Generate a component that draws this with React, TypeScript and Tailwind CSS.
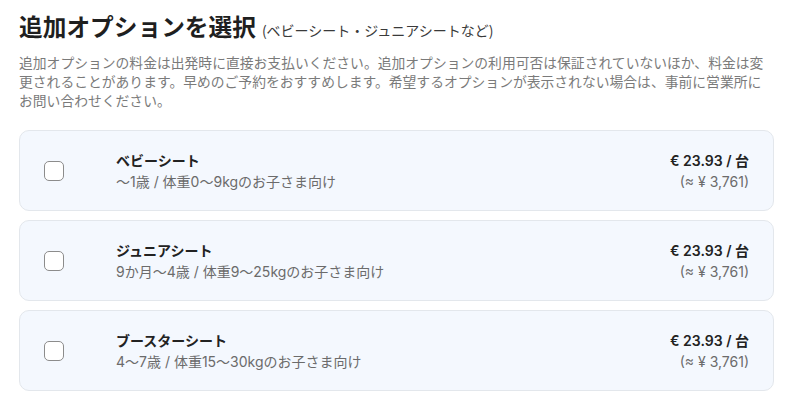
import React, { useState } from 'react';

interface SeatOption {
  id: string;
  name: string;
  note: string;
  price: string;
  approx: string;
}

const options: SeatOption[] = [
  { id: 'baby', name: 'ベビーシート', note: '〜1歳 / 体重0〜9kgのお子さま向け', price: '€ 23.93 / 台', approx: '(≈ ¥ 3,761)' },
  { id: 'junior', name: 'ジュニアシート', note: '9か月〜4歳 / 体重9〜25kgのお子さま向け', price: '€ 23.93 / 台', approx: '(≈ ¥ 3,761)' },
  { id: 'booster', name: 'ブースターシート', note: '4〜7歳 / 体重15〜30kgのお子さま向け', price: '€ 23.93 / 台', approx: '(≈ ¥ 3,761)' },
];

export default function App() {
  const [selected, setSelected] = useState<Record<string, boolean>>({});

  const toggle = (id: string) => {
    setSelected((prev) => ({ ...prev, [id]: !prev[id] }));
  };

  return (
    <div className="w-[793px] h-[408px] bg-white px-[19px] pt-[10px] font-['Noto_Sans_CJK_JP',sans-serif]">
      <h2 className="flex items-baseline leading-[32px] text-[#1f1f1f]">
        <span className="text-[23.7px] font-bold">追加オプションを選択</span>
        <span className="ml-[6px] text-[14px] font-normal text-[#3a3a3a]">(ベビーシート・ジュニアシートなど)</span>
      </h2>

      <p className="mt-[7px] text-[13.8px] leading-[19px] text-[#7a7a7a] whitespace-nowrap">
        追加オプションの料金は出発時に直接お支払いください。追加オプションの利用可否は保証されていないほか、料金は変
        <br />
        更されることがあります。早めのご予約をおすすめします。希望するオプションが表示されない場合は、事前に営業所に
        <br />
        お問い合わせください。
      </p>

      <div className="mt-[20px] flex flex-col gap-[9px]">
        {options.map((opt) => (
          <label
            key={opt.id}
            className="flex h-[81px] items-center rounded-[10px] border border-[#e3e7ec] bg-[#f4f8fe] pl-[24px] pr-[24px] cursor-pointer"
          >
            <input
              type="checkbox"
              checked={!!selected[opt.id]}
              onChange={() => toggle(opt.id)}
              className="h-[20px] w-[20px] shrink-0 appearance-none rounded-[5px] border border-[#8c8c8c] bg-white checked:bg-[#2563eb] checked:border-[#2563eb]"
            />
            <div className="ml-[52px] flex-1 font-['Inter','Noto_Sans_CJK_JP',sans-serif]">
              <div className="text-[14px] font-semibold leading-[21px] text-[#222]">{opt.name}</div>
              <div className="text-[14px] leading-[21px] text-[#6b6b6b]">{opt.note}</div>
            </div>
            <div className="text-right font-['Inter','Noto_Sans_CJK_JP',sans-serif]">
              <div className="text-[14px] font-semibold leading-[21px] text-[#222]">{opt.price}</div>
              <div className="text-[14px] leading-[21px] text-[#6b6b6b]">{opt.approx}</div>
            </div>
          </label>
        ))}
      </div>
    </div>
  );
}
